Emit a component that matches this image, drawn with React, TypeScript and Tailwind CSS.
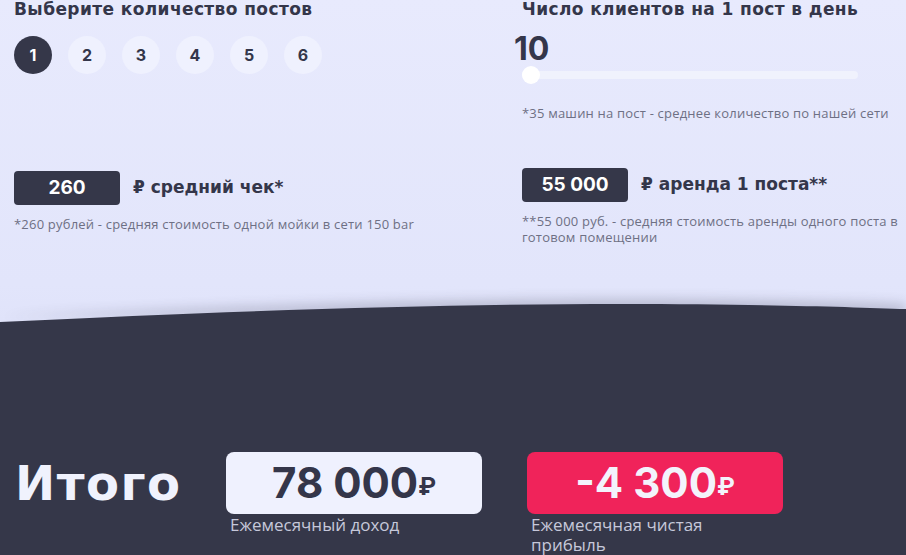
import React from "react";

const posts = [1, 2, 3, 4, 5, 6];

function Wave() {
  return (
    <svg width="906" height="37" viewBox="0 0 906 37" className="block shrink-0" preserveAspectRatio="none">
      <defs>
        <linearGradient id="bgfade" x1="0" y1="0" x2="0" y2="1">
          <stop offset="0" stopColor="#e2e5fb" />
          <stop offset="1" stopColor="#e0e3fa" />
        </linearGradient>
        <filter id="soft" x="-10%" y="-100%" width="120%" height="300%">
          <feGaussianBlur stdDeviation="6" />
        </filter>
      </defs>
      <rect width="906" height="37" fill="url(#bgfade)" />
      <path
        d="M0,37 C250,25 450,19 620,19 C760,19 850,22 906,24 L906,37 Z"
        fill="#2d2f45"
        opacity="0.22"
        filter="url(#soft)"
        transform="translate(0,-5)"
      />
      <path d="M0,37 C250,25 450,19 620,19 C760,19 850,22 906,24 L906,37 Z" fill="#353749" />
    </svg>
  );
}

const heading =
  "font-['DejaVu_Sans',sans-serif] text-[17px] font-bold leading-[20px] tracking-[0.4px] -mt-[1px] whitespace-nowrap";
const note = "text-[13px] leading-[16px] tracking-[0.2px] text-[#6e7084] font-['Open_Sans',sans-serif]";
const label = "mt-[1px] pl-[4px] text-[17px] leading-[20px] text-[#c6c8da] font-['Open_Sans',sans-serif]";

export default function App() {
  return (
    <div className="w-[906px] h-[555px] overflow-hidden flex flex-col font-['Inter','Noto_Sans',sans-serif] text-[#34364a]">
      <section className="h-[285px] shrink-0 bg-gradient-to-b from-[#e8eafd] to-[#e2e5fb] pl-[14px] flex">
        <div className="w-[508px] flex flex-col">
          <h2 className={heading}>Выберите количество постов</h2>
          <div className="flex gap-4 mt-[17px]">
            {posts.map((n) => (
              <div
                key={n}
                className={
                  n === 1
                    ? "w-[38px] h-[38px] rounded-full bg-[#353749] text-white flex items-center justify-center text-[16px] font-bold"
                    : "w-[38px] h-[38px] rounded-full bg-[#eff1fe] text-[#34364a] flex items-center justify-center text-[16px] font-bold"
                }
              >
                {n}
              </div>
            ))}
          </div>
          <div className="flex items-center gap-[13px] mt-[97px]">
            <div className="w-[106px] h-[34px] rounded-[4px] bg-[#353749] text-white flex items-center justify-center text-[19px] font-bold">
              260
            </div>
            <span className="font-['DejaVu_Sans',sans-serif] text-[17px] font-bold whitespace-nowrap">
              ₽ средний чек*
            </span>
          </div>
          <p className={"mt-[11px] whitespace-nowrap " + note}>
            *260 рублей - средняя стоимость одной мойки в сети 150 bar
          </p>
        </div>
        <div className="flex-1 flex flex-col">
          <h2 className={heading}>Число клиентов на 1 пост в день</h2>
          <div className="text-[32px] font-bold leading-[36px] mt-[12px] -ml-[8px]">10</div>
          <div className="relative mt-[4px] w-[336px] h-[8px] rounded-full bg-[#f0f2fd]">
            <div className="absolute left-0 top-[-5px] w-[18px] h-[18px] rounded-full bg-white" />
          </div>
          <p className={"mt-[26px] whitespace-nowrap " + note}>
            *35 машин на пост - среднее количество по нашей сети
          </p>
          <div className="flex items-center gap-[13px] mt-[47px]">
            <div className="w-[106px] h-[34px] rounded-[4px] bg-[#353749] text-white flex items-center justify-center text-[19px] font-bold">
              55 000
            </div>
            <span className="font-['DejaVu_Sans',sans-serif] text-[17px] font-bold whitespace-nowrap">
              ₽ аренда 1 поста**
            </span>
          </div>
          <p className={"mt-[11px] pr-[2px] " + note}>
            **55 000 руб. - средняя стоимость аренды одного поста в готовом помещении
          </p>
        </div>
      </section>
      <Wave />
      <section className="flex-1 min-h-0 bg-[#353749] flex pl-[15px] pt-[130px]">
        <h1 className="w-[211px] font-['DejaVu_Sans',sans-serif] text-[48px] font-bold leading-[62px] tracking-[1.5px] text-[#f0f2fd]">
          Итого
        </h1>
        <div className="w-[256px] flex flex-col">
          <div className="h-[62px] shrink-0 rounded-[8px] bg-[#eff1fe] flex items-center justify-center text-[#34364a]">
            <span className="text-[42px] font-bold leading-none">78 000</span>
            <span className="text-[24px] font-bold leading-none self-end mb-[15px]">₽</span>
          </div>
          <p className={label}>Ежемесячный доход</p>
        </div>
        <div className="w-[256px] ml-[45px] flex flex-col">
          <div className="h-[62px] shrink-0 rounded-[8px] bg-[#f0235a] flex items-center justify-center text-[#f3f3fb]">
            <span className="text-[42px] font-bold leading-none">-4 300</span>
            <span className="text-[24px] font-bold leading-none self-end mb-[15px]">₽</span>
          </div>
          <p className={label + " pr-[40px]"}>Ежемесячная чистая прибыль</p>
        </div>
      </section>
    </div>
  );
}
